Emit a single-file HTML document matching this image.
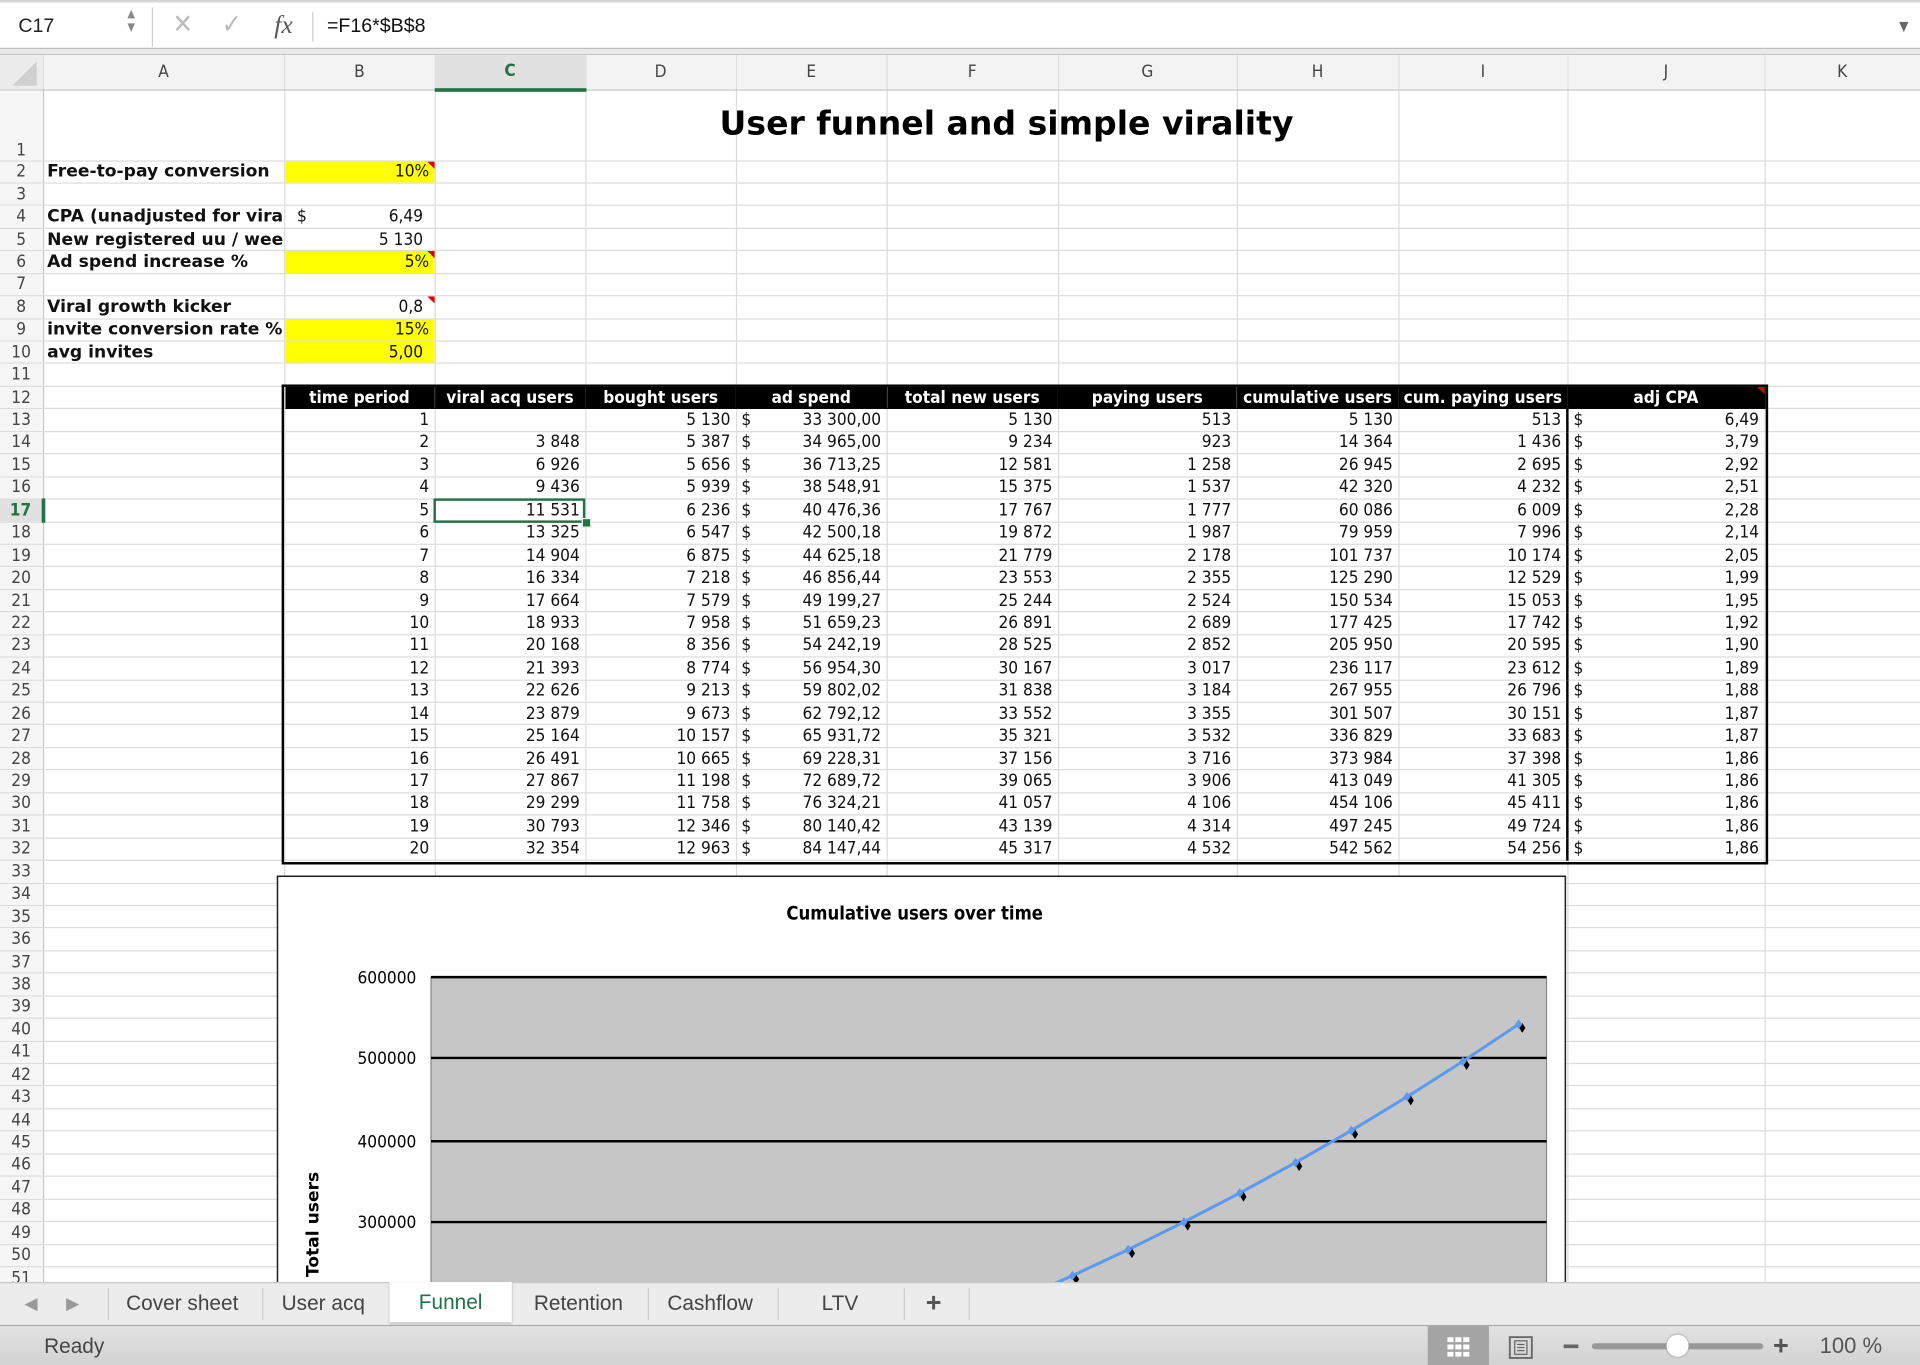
<!DOCTYPE html>
<html><head><meta charset="utf-8"><style>
html,body{margin:0;padding:0;width:1920px;height:1365px;overflow:hidden;background:#fff}
#w{position:absolute;left:0;top:0;width:1568px;height:1115px;transform:scale(1.22449);transform-origin:0 0;overflow:hidden;background:#fff;font-family:"DejaVu Sans Condensed","DejaVu Sans",sans-serif}
.abs{position:absolute}
#fb{left:0;top:0;width:1568px;height:40px;background:#fff;border-top:2px solid #d4d4d4;border-bottom:1px solid #bdbdbd;box-sizing:border-box}
#gap{left:0;top:40px;width:1568px;height:5px;background:#e9e9e9;border-bottom:1px solid #c8c8c8;box-sizing:border-box}
table{position:absolute;left:0;top:45px;border-collapse:collapse;table-layout:fixed;width:1568px}
td,th{padding:0 4px;overflow:hidden;white-space:nowrap;border-right:1px solid #dcdcdc;border-bottom:1px solid #dcdcdc;font-size:14px;line-height:16px;height:18.45px;box-sizing:border-box;position:relative;color:#111}
th{font-weight:normal;color:#444;background:#f6f6f6;border-right:1px solid #c4c4c4;text-align:center;padding:0;font-family:"DejaVu Sans Condensed","DejaVu Sans",sans-serif;font-size:14px}
tr.ch th{background:#f3f3f3;height:28px;border-bottom:1px solid #c4c4c4;border-right:1px solid #dcdcdc;font-size:14px;color:#444}
tr.ch th.sel{background:#e1e1e1;color:#217346;font-weight:bold;border-bottom:3px solid #217346}
tr.r1 td,tr.r1 th{height:58px;vertical-align:bottom}
td.n{text-align:right}
td.b{font-family:"DejaVu Sans",sans-serif;font-weight:bold;font-size:14px;padding-left:3px}
td.y{background:#ffff00}
td.h{background:#000;color:#fff;font-weight:bold;border-color:#000;padding:0}
td.h div{display:flex;justify-content:center;overflow:hidden;white-space:nowrap}
s{text-decoration:none;float:left}
.tri{position:absolute;right:0;top:0;width:0;height:0;border-top:6px solid #e00000;border-left:6px solid transparent}
td.bl{border-right:2px solid #000}
</style></head><body><div id="w">
<div id="fb" class="abs">
 <div class="abs" style="left:15px;top:11px;font-size:16px;color:#222;font-family:'Liberation Sans',sans-serif">C17</div>
 <div class="abs" style="left:104px;top:5px;font-size:9px;color:#888;line-height:11px">▲<br>▼</div>
 <div class="abs" style="left:124px;top:4px;width:1px;height:32px;background:#ccc"></div>
 <div class="abs" style="left:141px;top:6px;font-size:22px;color:#bbb">✕</div>
 <div class="abs" style="left:181px;top:6px;font-size:22px;color:#bbb">✓</div>
 <div class="abs" style="left:224px;top:6px;font-size:21px;color:#555;font-style:italic;font-family:'Liberation Serif',serif">fx</div>
 <div class="abs" style="left:255px;top:8px;width:1px;height:24px;background:#ccc"></div>
 <div class="abs" style="left:267px;top:11px;font-size:16px;color:#111;font-family:'Liberation Sans',sans-serif">=F16*$B$8</div>
 <div class="abs" style="left:1551px;top:13px;font-size:11px;color:#666">▼</div>
</div>
<div id="gap" class="abs"></div>
<table>
<colgroup><col style="width:35px"><col style="width:197px"><col style="width:123px"><col style="width:123px"><col style="width:123px"><col style="width:123px"><col style="width:140px"><col style="width:146px"><col style="width:132px"><col style="width:138px"><col style="width:161px"><col style="width:127px"></colgroup>
<tr class="ch"><th style="background:#ececec"><div style="position:absolute;left:10px;top:5px;width:0;height:0;border-bottom:20px solid #d0d0d0;border-left:20px solid transparent"></div></th><th>A</th><th>B</th><th class="sel">C</th><th>D</th><th>E</th><th>F</th><th>G</th><th>H</th><th>I</th><th>J</th><th>K</th></tr>
<tr class="r1"><th>1</th><td></td><td></td><td></td><td></td><td></td><td></td><td></td><td></td><td></td><td></td><td></td></tr>
<tr><th>2</th><td class="b">Free-to-pay conversion</td><td class="n y">10%<span class="tri"></span></td><td></td><td></td><td></td><td></td><td></td><td></td><td></td><td></td><td></td></tr>
<tr><th>3</th><td></td><td></td><td></td><td></td><td></td><td></td><td></td><td></td><td></td><td></td><td></td></tr>
<tr><th>4</th><td class="b">CPA (unadjusted for viral)</td><td class="n" style="padding-right:9px"><s style="margin-left:6px">$</s>6,49</td><td></td><td></td><td></td><td></td><td></td><td></td><td></td><td></td><td></td></tr>
<tr><th>5</th><td class="b">New registered uu / week</td><td class="n" style="padding-right:9px">5 130</td><td></td><td></td><td></td><td></td><td></td><td></td><td></td><td></td><td></td></tr>
<tr><th>6</th><td class="b">Ad spend increase %</td><td class="n y">5%<span class="tri"></span></td><td></td><td></td><td></td><td></td><td></td><td></td><td></td><td></td><td></td></tr>
<tr><th>7</th><td></td><td></td><td></td><td></td><td></td><td></td><td></td><td></td><td></td><td></td><td></td></tr>
<tr><th>8</th><td class="b">Viral growth kicker</td><td class="n" style="padding-right:9px">0,8<span class="tri"></span></td><td></td><td></td><td></td><td></td><td></td><td></td><td></td><td></td><td></td></tr>
<tr><th>9</th><td class="b">invite conversion rate %</td><td class="n y">15%</td><td></td><td></td><td></td><td></td><td></td><td></td><td></td><td></td><td></td></tr>
<tr><th>10</th><td class="b">avg invites</td><td class="n y" style="padding-right:9px">5,00</td><td></td><td></td><td></td><td></td><td></td><td></td><td></td><td></td><td></td></tr>
<tr><th>11</th><td></td><td></td><td></td><td></td><td></td><td></td><td></td><td></td><td></td><td></td><td></td></tr>
<tr><th>12</th><td></td><td class="h"><div>time period</div></td><td class="h"><div>viral acq users</div></td><td class="h"><div>bought users</div></td><td class="h"><div>ad spend</div></td><td class="h"><div>total new users</div></td><td class="h"><div>paying users</div></td><td class="h"><div>cumulative users</div></td><td class="h"><div>cum. paying users</div></td><td class="h"><div>adj CPA</div><span class="tri"></span></td><td></td></tr>
<tr><th>13</th><td></td><td class="n">1</td><td class="n"></td><td class="n">5 130</td><td class="n"><s>$</s>33 300,00</td><td class="n">5 130</td><td class="n">513</td><td class="n">5 130</td><td class="n bl">513</td><td class="n"><s>$</s>6,49</td><td></td></tr>
<tr><th>14</th><td></td><td class="n">2</td><td class="n">3 848</td><td class="n">5 387</td><td class="n"><s>$</s>34 965,00</td><td class="n">9 234</td><td class="n">923</td><td class="n">14 364</td><td class="n bl">1 436</td><td class="n"><s>$</s>3,79</td><td></td></tr>
<tr><th>15</th><td></td><td class="n">3</td><td class="n">6 926</td><td class="n">5 656</td><td class="n"><s>$</s>36 713,25</td><td class="n">12 581</td><td class="n">1 258</td><td class="n">26 945</td><td class="n bl">2 695</td><td class="n"><s>$</s>2,92</td><td></td></tr>
<tr><th>16</th><td></td><td class="n">4</td><td class="n">9 436</td><td class="n">5 939</td><td class="n"><s>$</s>38 548,91</td><td class="n">15 375</td><td class="n">1 537</td><td class="n">42 320</td><td class="n bl">4 232</td><td class="n"><s>$</s>2,51</td><td></td></tr>
<tr><th style="color:#217346;font-weight:bold;background:#e1e1e1;border-right:3px solid #217346">17</th><td></td><td class="n">5</td><td class="n">11 531</td><td class="n">6 236</td><td class="n"><s>$</s>40 476,36</td><td class="n">17 767</td><td class="n">1 777</td><td class="n">60 086</td><td class="n bl">6 009</td><td class="n"><s>$</s>2,28</td><td></td></tr>
<tr><th>18</th><td></td><td class="n">6</td><td class="n">13 325</td><td class="n">6 547</td><td class="n"><s>$</s>42 500,18</td><td class="n">19 872</td><td class="n">1 987</td><td class="n">79 959</td><td class="n bl">7 996</td><td class="n"><s>$</s>2,14</td><td></td></tr>
<tr><th>19</th><td></td><td class="n">7</td><td class="n">14 904</td><td class="n">6 875</td><td class="n"><s>$</s>44 625,18</td><td class="n">21 779</td><td class="n">2 178</td><td class="n">101 737</td><td class="n bl">10 174</td><td class="n"><s>$</s>2,05</td><td></td></tr>
<tr><th>20</th><td></td><td class="n">8</td><td class="n">16 334</td><td class="n">7 218</td><td class="n"><s>$</s>46 856,44</td><td class="n">23 553</td><td class="n">2 355</td><td class="n">125 290</td><td class="n bl">12 529</td><td class="n"><s>$</s>1,99</td><td></td></tr>
<tr><th>21</th><td></td><td class="n">9</td><td class="n">17 664</td><td class="n">7 579</td><td class="n"><s>$</s>49 199,27</td><td class="n">25 244</td><td class="n">2 524</td><td class="n">150 534</td><td class="n bl">15 053</td><td class="n"><s>$</s>1,95</td><td></td></tr>
<tr><th>22</th><td></td><td class="n">10</td><td class="n">18 933</td><td class="n">7 958</td><td class="n"><s>$</s>51 659,23</td><td class="n">26 891</td><td class="n">2 689</td><td class="n">177 425</td><td class="n bl">17 742</td><td class="n"><s>$</s>1,92</td><td></td></tr>
<tr><th>23</th><td></td><td class="n">11</td><td class="n">20 168</td><td class="n">8 356</td><td class="n"><s>$</s>54 242,19</td><td class="n">28 525</td><td class="n">2 852</td><td class="n">205 950</td><td class="n bl">20 595</td><td class="n"><s>$</s>1,90</td><td></td></tr>
<tr><th>24</th><td></td><td class="n">12</td><td class="n">21 393</td><td class="n">8 774</td><td class="n"><s>$</s>56 954,30</td><td class="n">30 167</td><td class="n">3 017</td><td class="n">236 117</td><td class="n bl">23 612</td><td class="n"><s>$</s>1,89</td><td></td></tr>
<tr><th>25</th><td></td><td class="n">13</td><td class="n">22 626</td><td class="n">9 213</td><td class="n"><s>$</s>59 802,02</td><td class="n">31 838</td><td class="n">3 184</td><td class="n">267 955</td><td class="n bl">26 796</td><td class="n"><s>$</s>1,88</td><td></td></tr>
<tr><th>26</th><td></td><td class="n">14</td><td class="n">23 879</td><td class="n">9 673</td><td class="n"><s>$</s>62 792,12</td><td class="n">33 552</td><td class="n">3 355</td><td class="n">301 507</td><td class="n bl">30 151</td><td class="n"><s>$</s>1,87</td><td></td></tr>
<tr><th>27</th><td></td><td class="n">15</td><td class="n">25 164</td><td class="n">10 157</td><td class="n"><s>$</s>65 931,72</td><td class="n">35 321</td><td class="n">3 532</td><td class="n">336 829</td><td class="n bl">33 683</td><td class="n"><s>$</s>1,87</td><td></td></tr>
<tr><th>28</th><td></td><td class="n">16</td><td class="n">26 491</td><td class="n">10 665</td><td class="n"><s>$</s>69 228,31</td><td class="n">37 156</td><td class="n">3 716</td><td class="n">373 984</td><td class="n bl">37 398</td><td class="n"><s>$</s>1,86</td><td></td></tr>
<tr><th>29</th><td></td><td class="n">17</td><td class="n">27 867</td><td class="n">11 198</td><td class="n"><s>$</s>72 689,72</td><td class="n">39 065</td><td class="n">3 906</td><td class="n">413 049</td><td class="n bl">41 305</td><td class="n"><s>$</s>1,86</td><td></td></tr>
<tr><th>30</th><td></td><td class="n">18</td><td class="n">29 299</td><td class="n">11 758</td><td class="n"><s>$</s>76 324,21</td><td class="n">41 057</td><td class="n">4 106</td><td class="n">454 106</td><td class="n bl">45 411</td><td class="n"><s>$</s>1,86</td><td></td></tr>
<tr><th>31</th><td></td><td class="n">19</td><td class="n">30 793</td><td class="n">12 346</td><td class="n"><s>$</s>80 140,42</td><td class="n">43 139</td><td class="n">4 314</td><td class="n">497 245</td><td class="n bl">49 724</td><td class="n"><s>$</s>1,86</td><td></td></tr>
<tr><th>32</th><td></td><td class="n">20</td><td class="n">32 354</td><td class="n">12 963</td><td class="n"><s>$</s>84 147,44</td><td class="n">45 317</td><td class="n">4 532</td><td class="n">542 562</td><td class="n bl">54 256</td><td class="n"><s>$</s>1,86</td><td></td></tr>
<tr><th>33</th><td></td><td></td><td></td><td></td><td></td><td></td><td></td><td></td><td></td><td></td><td></td></tr>
<tr><th>34</th><td></td><td></td><td></td><td></td><td></td><td></td><td></td><td></td><td></td><td></td><td></td></tr>
<tr><th>35</th><td></td><td></td><td></td><td></td><td></td><td></td><td></td><td></td><td></td><td></td><td></td></tr>
<tr><th>36</th><td></td><td></td><td></td><td></td><td></td><td></td><td></td><td></td><td></td><td></td><td></td></tr>
<tr><th>37</th><td></td><td></td><td></td><td></td><td></td><td></td><td></td><td></td><td></td><td></td><td></td></tr>
<tr><th>38</th><td></td><td></td><td></td><td></td><td></td><td></td><td></td><td></td><td></td><td></td><td></td></tr>
<tr><th>39</th><td></td><td></td><td></td><td></td><td></td><td></td><td></td><td></td><td></td><td></td><td></td></tr>
<tr><th>40</th><td></td><td></td><td></td><td></td><td></td><td></td><td></td><td></td><td></td><td></td><td></td></tr>
<tr><th>41</th><td></td><td></td><td></td><td></td><td></td><td></td><td></td><td></td><td></td><td></td><td></td></tr>
<tr><th>42</th><td></td><td></td><td></td><td></td><td></td><td></td><td></td><td></td><td></td><td></td><td></td></tr>
<tr><th>43</th><td></td><td></td><td></td><td></td><td></td><td></td><td></td><td></td><td></td><td></td><td></td></tr>
<tr><th>44</th><td></td><td></td><td></td><td></td><td></td><td></td><td></td><td></td><td></td><td></td><td></td></tr>
<tr><th>45</th><td></td><td></td><td></td><td></td><td></td><td></td><td></td><td></td><td></td><td></td><td></td></tr>
<tr><th>46</th><td></td><td></td><td></td><td></td><td></td><td></td><td></td><td></td><td></td><td></td><td></td></tr>
<tr><th>47</th><td></td><td></td><td></td><td></td><td></td><td></td><td></td><td></td><td></td><td></td><td></td></tr>
<tr><th>48</th><td></td><td></td><td></td><td></td><td></td><td></td><td></td><td></td><td></td><td></td><td></td></tr>
<tr><th>49</th><td></td><td></td><td></td><td></td><td></td><td></td><td></td><td></td><td></td><td></td><td></td></tr>
<tr><th>50</th><td></td><td></td><td></td><td></td><td></td><td></td><td></td><td></td><td></td><td></td><td></td></tr>
<tr><th>51</th><td></td><td></td><td></td><td></td><td></td><td></td><td></td><td></td><td></td><td></td><td></td></tr>
</table>
<div class="abs" style="left:300px;top:86px;width:1044px;text-align:center;font-family:'DejaVu Sans',sans-serif;font-weight:bold;font-size:27px;color:#000">User funnel and simple virality</div>
<div class="abs" style="left:230px;top:314px;width:1210px;height:388px;border:2px solid #000"></div>
<div class="abs" style="left:354px;top:407px;width:124px;height:20px;border:2px solid #217346;box-sizing:border-box"></div>
<div class="abs" style="left:475px;top:423px;width:6px;height:6px;background:#217346;border:1px solid #fff"></div>
<svg class="abs" style="left:226px;top:715px" width="1053" height="332" viewBox="226 715 1053 332">
<rect x="226.5" y="715.5" width="1052" height="340" fill="#fff" stroke="#222" stroke-width="1.5"/>
<text x="747" y="751" text-anchor="middle" font-family="DejaVu Sans Condensed,DejaVu Sans,sans-serif" font-weight="bold" font-size="15">Cumulative users over time</text>
<rect x="352" y="798" width="911" height="402" fill="#c6c6c6" stroke="#888"/>
<g stroke="#000" stroke-width="2"><line x1="352" y1="798" x2="1263" y2="798"/><line x1="352" y1="864" x2="1263" y2="864"/><line x1="352" y1="932" x2="1263" y2="932"/><line x1="352" y1="998" x2="1263" y2="998"/><line x1="352" y1="1065" x2="1263" y2="1065"/></g>
<g font-family="DejaVu Sans Condensed,DejaVu Sans,sans-serif" font-size="14" text-anchor="end"><text x="340" y="803">600000</text><text x="340" y="869">500000</text><text x="340" y="937">400000</text><text x="340" y="1003">300000</text></g>
<text transform="translate(260,1000) rotate(-90)" text-anchor="middle" font-family="DejaVu Sans,sans-serif" font-weight="bold" font-size="14">Total users</text>
<polyline fill="none" stroke="#5b9bef" stroke-width="2.5" points="374.8,1196.6 420.3,1190.4 465.9,1181.9 511.4,1171.6 557,1159.7 602.5,1146.4 648.1,1131.8 693.6,1116.1 739.2,1099.1 784.7,1081.1 830.3,1062 875.8,1041.8 921.4,1020.5 966.9,998 1012.5,974.3 1058,949.4 1103.6,923.3 1149.1,895.7 1194.7,866.8 1240.2,836.5"/>
<g fill="#000">
<path d="M878.8,1040.8l2.5,4l-2.5,4l-2.5,-4z"/><path d="M924.4,1019.5l2.5,4l-2.5,4l-2.5,-4z"/><path d="M969.9,997l2.5,4l-2.5,4l-2.5,-4z"/><path d="M1015.5,973.3l2.5,4l-2.5,4l-2.5,-4z"/><path d="M1061,948.4l2.5,4l-2.5,4l-2.5,-4z"/><path d="M1106.6,922.3l2.5,4l-2.5,4l-2.5,-4z"/><path d="M1152.1,894.7l2.5,4l-2.5,4l-2.5,-4z"/><path d="M1197.7,865.8l2.5,4l-2.5,4l-2.5,-4z"/><path d="M1243.2,835.5l2.5,4l-2.5,4l-2.5,-4z"/>
</g>
<g fill="#5b9bef">
<path d="M875.8,1037.8l3,4l-3,4l-3,-4z"/><path d="M921.4,1016.5l3,4l-3,4l-3,-4z"/><path d="M966.9,994l3,4l-3,4l-3,-4z"/><path d="M1012.5,970.3l3,4l-3,4l-3,-4z"/><path d="M1058,945.4l3,4l-3,4l-3,-4z"/><path d="M1103.6,919.3l3,4l-3,4l-3,-4z"/><path d="M1149.1,891.7l3,4l-3,4l-3,-4z"/><path d="M1194.7,862.8l3,4l-3,4l-3,-4z"/><path d="M1240.2,832.5l3,4l-3,4l-3,-4z"/>
</g>
</svg>
<div class="abs" style="left:0;top:1047px;width:1568px;height:35px;background:#ececec;border-top:1px solid #c8c8c8;box-sizing:border-box;font-family:'Liberation Sans',sans-serif;font-size:17px;color:#444">
 <div class="abs" style="left:20px;top:8px;font-size:14px;color:#999">◀</div>
 <div class="abs" style="left:54px;top:8px;font-size:14px;color:#999">▶</div>
 <div class="abs" style="left:88px;top:4px;width:1px;height:26px;background:#ccc"></div>
 <div class="abs" style="left:103px;top:7px">Cover sheet</div>
 <div class="abs" style="left:214px;top:4px;width:1px;height:26px;background:#ccc"></div>
 <div class="abs" style="left:230px;top:7px">User acq</div>
 <div class="abs" style="left:318px;top:-1px;width:100px;height:33px;background:#fff;box-shadow:0 1px 2px #999;text-align:center;line-height:33px;color:#217346">Funnel</div>
 <div class="abs" style="left:436px;top:7px">Retention</div>
 <div class="abs" style="left:529px;top:4px;width:1px;height:26px;background:#ccc"></div>
 <div class="abs" style="left:545px;top:7px">Cashflow</div>
 <div class="abs" style="left:635px;top:4px;width:1px;height:26px;background:#ccc"></div>
 <div class="abs" style="left:671px;top:7px">LTV</div>
 <div class="abs" style="left:738px;top:4px;width:1px;height:26px;background:#ccc"></div>
 <div class="abs" style="left:756px;top:3px;font-size:22px;font-weight:bold;color:#555">+</div>
 <div class="abs" style="left:791px;top:4px;width:1px;height:26px;background:#ccc"></div>
</div>
<div class="abs" style="left:0;top:1082px;width:1568px;height:33px;background:linear-gradient(#e2e2e2,#d2d2d2);border-top:1px solid #a8a8a8;box-sizing:border-box;font-family:'Liberation Sans',sans-serif;font-size:17px;color:#444">
 <div class="abs" style="left:36px;top:7px">Ready</div>
 <div class="abs" style="left:1166px;top:0;width:50px;height:33px;background:#a4a4a4"></div>
 <svg class="abs" style="left:1182px;top:9px" width="18" height="16"><g fill="#fff"><rect x="0" y="0" width="5" height="4"/><rect x="6.5" y="0" width="5" height="4"/><rect x="13" y="0" width="5" height="4"/><rect x="0" y="6" width="5" height="4"/><rect x="6.5" y="6" width="5" height="4"/><rect x="13" y="6" width="5" height="4"/><rect x="0" y="12" width="5" height="4"/><rect x="6.5" y="12" width="5" height="4"/><rect x="13" y="12" width="5" height="4"/></g></svg>
 <svg class="abs" style="left:1232px;top:8px" width="20" height="19"><rect x="1" y="1" width="18" height="17" fill="none" stroke="#666" stroke-width="1.5"/><rect x="5" y="4" width="10" height="11" fill="none" stroke="#666"/><line x1="7" y1="7" x2="13" y2="7" stroke="#666"/><line x1="7" y1="9.5" x2="13" y2="9.5" stroke="#666"/><line x1="7" y1="12" x2="13" y2="12" stroke="#666"/></svg>
 <div class="abs" style="left:1277px;top:15px;width:12px;height:3px;background:#666"></div>
 <div class="abs" style="left:1300px;top:14px;width:140px;height:5px;border-radius:3px;background:#999"></div>
 <div class="abs" style="left:1361px;top:7px;width:18px;height:18px;border-radius:9px;background:#fff;box-shadow:0 0 2px #888"></div>
 <div class="abs" style="left:1448px;top:3px;font-size:22px;font-weight:bold;color:#555">+</div>
 <div class="abs" style="left:1486px;top:6px;font-size:18px;color:#555">100 %</div>
</div>
</div></body></html>
